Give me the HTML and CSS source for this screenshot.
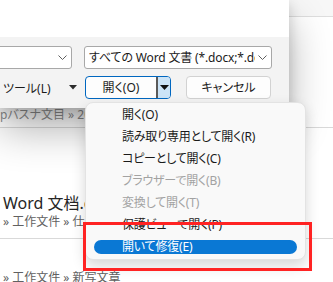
FILE: index.html
```html
<!DOCTYPE html>
<html lang="ja">
<head>
<meta charset="utf-8">
<link rel="stylesheet" href="styles.css">
</head>
<body>
<div class="page">
  <div class="backstage">
    <div class="bs-head"></div>
    <div class="bs-item first">
      <div class="bs-path faint">pバスナ文目 » 2024</div>
    </div>
    <div class="bs-item second">
      <div class="bs-title">Word 文档.docx</div>
      <div class="bs-path">» 工作文件 » 仕事</div>
    </div>
    <div class="bs-item third">
      <div class="bs-path">» 工作文件 » 新写文章</div>
    </div>
  </div>

  <div class="dialog">
    <div class="dlg-top"></div>
    <div class="dlg-bottom">
      <div class="row">
        <div class="combo combo-name">
          <span class="combo-text"></span>
          <svg class="chev" width="9" height="5" viewBox="0 0 9 5"><polyline points="0.5,0.5 4.5,4.5 8.5,0.5" fill="none" stroke="#5f5f5f" stroke-width="1"/></svg>
        </div>
        <div class="combo combo-type">
          <span class="combo-text">すべての Word 文書 (*.docx;*.docm;*.dotx)</span>
          <svg class="chev" width="9" height="5" viewBox="0 0 9 5"><polyline points="0.5,0.5 4.5,4.5 8.5,0.5" fill="none" stroke="#5f5f5f" stroke-width="1"/></svg>
        </div>
      </div>
      <div class="row row2">
        <div class="tools">
          <span>ツール(L)</span>
          <svg class="tri" width="8" height="5" viewBox="0 0 8 5"><polygon points="0,0 8,0 4,4.5" fill="#2b2b2b"/></svg>
        </div>
        <div class="split">
          <span class="split-main">開く(O)</span>
          <span class="split-arrow"><svg width="9" height="5" viewBox="0 0 9 5"><polygon points="0,0 9,0 4.5,5" fill="#111"/></svg></span>
        </div>
        <div class="btn">キャンセル</div>
      </div>
    </div>
  </div>

  <div class="menu">
    <div class="mi">開く(O)</div>
    <div class="mi">読み取り専用として開く(R)</div>
    <div class="mi">コピーとして開く(C)</div>
    <div class="mi dis">ブラウザーで開く(B)</div>
    <div class="mi dis">変換して開く(T)</div>
    <div class="mi">保護ビューで開く(P)</div>
    <div class="mi sel"><span class="sel-bar">開いて修復(E)</span></div>
  </div>

  <div class="redbox"></div>
</div>
</body>
</html>
```

FILE: styles.css
```css
* { box-sizing: border-box; }
html, body { margin: 0; padding: 0; }
body {
  width: 333px;
  height: 282px;
  overflow: hidden;
  font-family: "Noto Sans", "Noto Sans CJK JP", sans-serif;
  font-feature-settings: "palt";
  background: #ffffff;
}
.page {
  position: relative;
  width: 333px;
  height: 282px;
  overflow: hidden;
  background: #ffffff;
}

/* backstage behind */
.backstage {
  width: 333px;
  color: #333;
}
.bs-head {
  height: 17px;
  border-bottom: 1px solid #dedede;
  background: #f7f7f7;
}
.bs-item {
  border-bottom: 1px solid #d9d9d9;
  padding-left: 3px;
  white-space: nowrap;
}
.bs-item.first { height: 111px; padding-top: 89px; padding-left: 0; }
.bs-item.second { height: 111px; padding-top: 65px; }
.bs-item.third { border-bottom: none; padding-top: 30px; }
.bs-title {
  font-size: 16px;
  line-height: 20px;
  color: #262626;
}
.bs-path {
  font-size: 12px;
  line-height: 18px;
  color: #616161;
}
.bs-path.faint { color: #8e8e8e; }

/* dialog */
.dialog {
  position: absolute;
  left: 0;
  top: 0;
  width: 289px;
  height: 108px;
  background: #f3f3f3;
  box-shadow: 0 22px 40px rgba(0,0,0,0.30), 0 4px 12px rgba(0,0,0,0.16);
  display: flex;
  flex-direction: column;
  font-size: 12px;
  color: #1b1b1b;
}
.dlg-top {
  height: 37px;
  background: #ffffff;
}
.dlg-bottom {
  flex: 1;
  padding-top: 9px;
}
.row {
  display: flex;
  align-items: center;
  height: 23px;
}
.row2 {
  margin-top: 7px;
}
.combo {
  height: 23px;
  background: #ffffff;
  border: 1px solid #a8a8a8;
  border-radius: 3px;
  display: flex;
  align-items: center;
  padding: 0 4px 0 4px;
}
.combo-name {
  margin-left: -14px;
  width: 86px;
}
.combo-type {
  margin-left: 12px;
  width: 188px;
}
.combo-text {
  flex: 1;
  overflow: hidden;
  white-space: nowrap;
  line-height: 21px;
  font-size: 12px;
  letter-spacing: -0.15px;
}
.chev {
  flex: none;
  margin-left: 3px;
  margin-right: 0;
}
.tools {
  width: 85px;
  padding-left: 3px;
  display: flex;
  align-items: center;
  white-space: nowrap;
}
.tools .tri {
  margin-left: 18px;
}
.split {
  width: 86px;
  height: 23px;
  border: 1px solid #0067c0;
  border-radius: 4px;
  background: #fdfdfd;
  display: flex;
  overflow: hidden;
}
.split-main {
  flex: 1;
  text-align: center;
  line-height: 21px;
}
.split-arrow {
  width: 14px;
  background: #cce4f7;
  border-left: 2px solid #5a5a5a;
  display: flex;
  align-items: center;
  justify-content: center;
}
.btn {
  margin-left: 15px;
  width: 85px;
  height: 23px;
  border: 1px solid #d2d2d2;
  border-radius: 4px;
  background: #fdfdfd;
  text-align: center;
  line-height: 21px;
}

/* context menu */
.menu {
  position: absolute;
  left: 85px;
  top: 102px;
  width: 221px;
  height: 158px;
  background: #f9f9f9;
  border: 1px solid #e3e3e3;
  border-radius: 8px;
  box-shadow: 0 6px 14px rgba(0,0,0,0.16);
  padding-top: 1px;
  font-size: 12px;
  color: #1a1a1a;
}
.mi {
  height: 22px;
  line-height: 22px;
  padding-left: 36px;
  white-space: nowrap;
  letter-spacing: -0.2px;
}
.mi.dis { color: #a2a2a2; }
.mi.sel {
  padding-left: 8px;
  padding-right: 8px;
  display: flex;
  align-items: center;
}
.sel-bar {
  flex: 1;
  height: 14px;
  line-height: 14px;
  background: #0a78d4;
  color: #ffffff;
  border-radius: 7px;
  padding-left: 28px;
}

/* annotation */
.redbox {
  position: absolute;
  left: 83px;
  top: 222px;
  width: 229px;
  height: 49px;
  border: 3px solid #ff2323;
}
```
